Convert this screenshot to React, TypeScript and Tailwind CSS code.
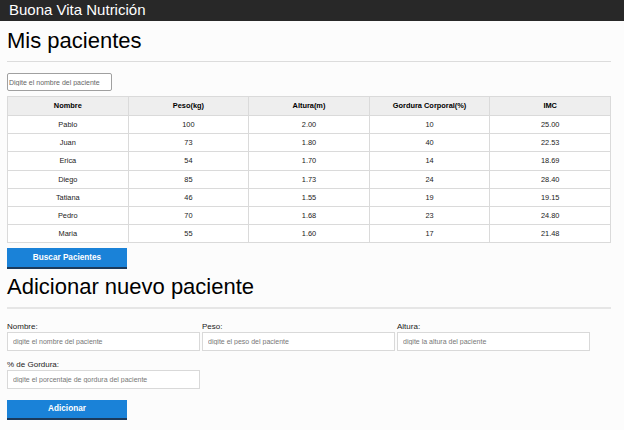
import React from "react";

const pacientes = [
  ["Pablo", "100", "2.00", "10", "25.00"],
  ["Juan", "73", "1.80", "40", "22.53"],
  ["Erica", "54", "1.70", "14", "18.69"],
  ["Diego", "85", "1.73", "24", "28.40"],
  ["Tatiana", "46", "1.55", "19", "19.15"],
  ["Pedro", "70", "1.68", "23", "24.80"],
  ["Maria", "55", "1.60", "17", "21.48"],
];

const headers = ["Nombre", "Peso(kg)", "Altura(m)", "Gordura Corporal(%)", "IMC"];

function Field({ label, placeholder }: { label: string; placeholder: string }) {
  return (
    <div className="w-[195px]">
      <div className="text-[8px] leading-[10px] text-[#222] h-[10px]">{label}</div>
      <input
        className="block w-[193px] h-[19px] border border-[#d9d9d9] bg-white px-[5px] text-[7px] outline-none placeholder:text-[#777]"
        placeholder={placeholder}
      />
    </div>
  );
}

export default function App() {
  return (
    <div
      className="w-[624px] h-[430px] bg-[#fcfcfc] text-black overflow-hidden"
      style={{ fontFamily: '"Liberation Sans", Arial, sans-serif' }}
    >
      <header className="h-[21px] bg-[#282828] pl-[9px] text-[15px] leading-[20px] text-white">
        Buona Vita Nutrición
      </header>
      <main className="pl-[7px] pr-[13px]">
        <h1 className="mt-[7px] text-[22px] leading-[25px] font-normal">Mis pacientes</h1>
        <hr className="mt-[8px] border-0 border-t border-[#dcdcdc]" />
        <input
          className="mt-[11px] block w-[105px] h-[18px] border border-[#a0a0a0] rounded-[2px] bg-white px-[1px] text-[7px] outline-none placeholder:text-[#666]"
          placeholder="Digite el nombre del paciente"
        />
        <table className="mt-[5px] w-[604px] table-fixed border-collapse text-[7.4px]">
          <thead>
            <tr className="h-[19px] bg-[#eeeeee]">
              {headers.map((h) => (
                <th key={h} className="border border-[#dadada] font-bold text-center p-0">
                  {h}
                </th>
              ))}
            </tr>
          </thead>
          <tbody>
            {pacientes.map((row) => (
              <tr key={row[0]} className="h-[18.2px] bg-white">
                {row.map((c, i) => (
                  <td key={i} className="border border-[#dadada] text-center p-0 text-[#222]">
                    {c}
                  </td>
                ))}
              </tr>
            ))}
          </tbody>
        </table>
        <button className="mt-[5px] block w-[120px] h-[21px] bg-[#1a82d8] border-b-2 border-[#1b3a5c] text-white text-[8.2px] font-bold">
          Buscar Pacientes
        </button>
        <h2 className="mt-[5px] text-[22px] leading-[25px] font-normal">Adicionar nuevo paciente</h2>
        <hr className="mt-[8px] border-0 border-t-2 border-[#e6e6e6]" />
        <div className="mt-[13px] flex">
          <Field label="Nombre:" placeholder="digite el nombre del paciente" />
          <Field label="Peso:" placeholder="digite el peso del paciente" />
          <Field label="Altura:" placeholder="digite la altura del paciente" />
        </div>
        <div className="mt-[9px] flex">
          <Field label="% de Gordura:" placeholder="digite el porcentaje de gordura del paciente" />
        </div>
        <button className="mt-[11px] block w-[120px] h-[20px] bg-[#1a82d8] border-b-2 border-[#1b3a5c] text-white text-[8.2px] font-bold">
          Adicionar
        </button>
      </main>
    </div>
  );
}
